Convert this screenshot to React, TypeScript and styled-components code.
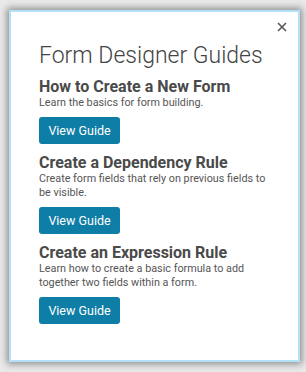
import { FC } from 'react'
import styled, { createGlobalStyle } from 'styled-components'

const GlobalStyle = createGlobalStyle`
  html, body {
    margin: 0;
    padding: 0;
    background: #e9e9e9;
  }
  body {
    font-family: Roboto, 'Liberation Sans', Arial, sans-serif;
  }
  p, h1, h2 {
    margin: 0;
  }
`

const Page = styled.div`
  width: 306px;
  height: 372px;
  padding: 10px 6px 10px 9px;
  box-sizing: border-box;
`

const Modal = styled.div`
  position: relative;
  display: flex;
  flex-direction: column;
  width: 291px;
  height: 352px;
  box-sizing: border-box;
  padding: 30px 20px 0 28px;
  background: #fff;
  border: 2px solid #b5e1f7;
  box-shadow: 0 0 7px 2px rgba(0, 0, 0, 0.4);
`

const CloseButton = styled.button`
  position: absolute;
  top: 8px;
  right: 9px;
  width: 14px;
  height: 14px;
  padding: 0;
  border: none;
  background: transparent;
  cursor: pointer;
  display: flex;
  align-items: center;
  justify-content: center;
`

const Title = styled.h1`
  font-size: 23px;
  line-height: 27px;
  font-weight: 300;
  color: #444;
  margin-bottom: 8px;
`

const Guide = styled.div`
  display: flex;
  flex-direction: column;
  align-items: flex-start;
  margin-bottom: 9px;
`

const GuideTitle = styled.h2`
  font-size: 16px;
  line-height: 19px;
  font-weight: 700;
  color: #4a4a4a;
`

const GuideText = styled.p`
  font-size: 10.8px;
  line-height: 14px;
  color: #555;
  margin-bottom: 7px;
`

const ViewButton = styled.button`
  height: 27px;
  width: 81px;
  padding: 0;
  border: none;
  border-radius: 3px;
  background: #0f7ea6;
  color: #fff;
  font-family: inherit;
  font-size: 12.5px;
  cursor: pointer;
`

interface IGuide {
  title: string
  text: string
}

const guides: IGuide[] = [
  { title: 'How to Create a New Form', text: 'Learn the basics for form building.' },
  {
    title: 'Create a Dependency Rule',
    text: 'Create form fields that rely on previous fields to be visible.',
  },
  {
    title: 'Create an Expression Rule',
    text: 'Learn how to create a basic formula to add together two fields within a form.',
  },
]

const App: FC = () => {
  return (
    <Page>
      <GlobalStyle />
      <Modal>
        <CloseButton aria-label="Close">
          <svg width="10" height="10" viewBox="0 0 10 10">
            <path d="M1 1L9 9M9 1L1 9" stroke="#555" strokeWidth="1.6" />
          </svg>
        </CloseButton>
        <Title>Form Designer Guides</Title>
        {guides.map((g) => (
          <Guide key={g.title}>
            <GuideTitle>{g.title}</GuideTitle>
            <GuideText>{g.text}</GuideText>
            <ViewButton>View Guide</ViewButton>
          </Guide>
        ))}
      </Modal>
    </Page>
  )
}

export default App
